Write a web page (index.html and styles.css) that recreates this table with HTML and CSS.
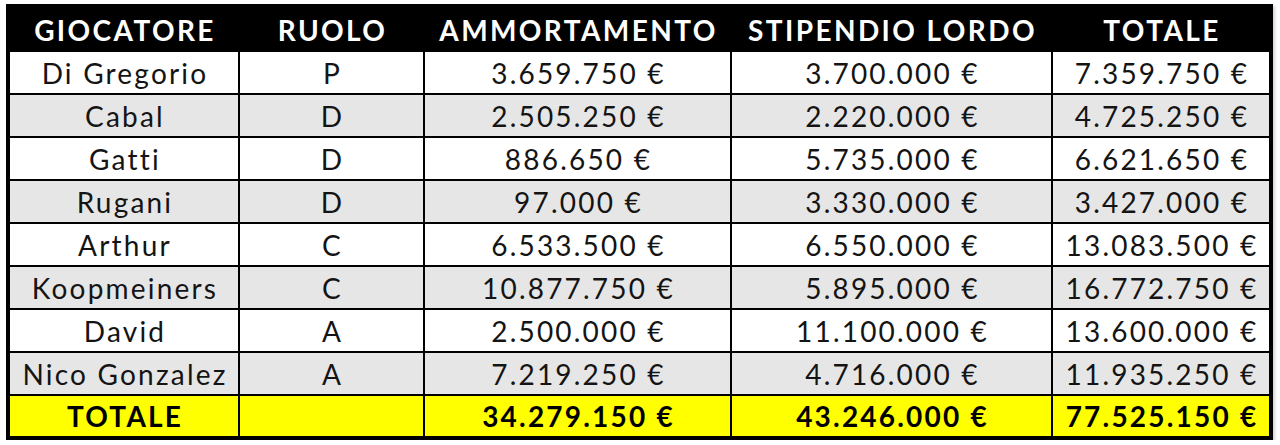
FILE: index.html
```html
<!DOCTYPE html>
<html lang="it">
<head>
<meta charset="utf-8">
<title>Monte ingaggi</title>
<link rel="stylesheet" href="styles.css">
</head>
<body>
<div class="sheet">
  <div class="cell head">GIOCATORE</div>
  <div class="cell head">RUOLO</div>
  <div class="cell head">AMMORTAMENTO</div>
  <div class="cell head">STIPENDIO LORDO</div>
  <div class="cell head">TOTALE</div>

  <div class="cell">Di Gregorio</div><div class="cell">P</div><div class="cell">3.659.750 €</div><div class="cell">3.700.000 €</div><div class="cell">7.359.750 €</div>
  <div class="cell alt">Cabal</div><div class="cell alt">D</div><div class="cell alt">2.505.250 €</div><div class="cell alt">2.220.000 €</div><div class="cell alt">4.725.250 €</div>
  <div class="cell">Gatti</div><div class="cell">D</div><div class="cell">886.650 €</div><div class="cell">5.735.000 €</div><div class="cell">6.621.650 €</div>
  <div class="cell alt">Rugani</div><div class="cell alt">D</div><div class="cell alt">97.000 €</div><div class="cell alt">3.330.000 €</div><div class="cell alt">3.427.000 €</div>
  <div class="cell">Arthur</div><div class="cell">C</div><div class="cell">6.533.500 €</div><div class="cell">6.550.000 €</div><div class="cell">13.083.500 €</div>
  <div class="cell alt">Koopmeiners</div><div class="cell alt">C</div><div class="cell alt">10.877.750 €</div><div class="cell alt">5.895.000 €</div><div class="cell alt">16.772.750 €</div>
  <div class="cell">David</div><div class="cell">A</div><div class="cell">2.500.000 €</div><div class="cell">11.100.000 €</div><div class="cell">13.600.000 €</div>
  <div class="cell alt">Nico Gonzalez</div><div class="cell alt">A</div><div class="cell alt">7.219.250 €</div><div class="cell alt">4.716.000 €</div><div class="cell alt">11.935.250 €</div>

  <div class="cell total">TOTALE</div>
  <div class="cell total"></div>
  <div class="cell total">34.279.150 €</div>
  <div class="cell total">43.246.000 €</div>
  <div class="cell total">77.525.150 €</div>
</div>
</body>
</html>
```
FILE: styles.css
```css
html, body {
  margin: 0;
  padding: 0;
  background: #ffffff;
}

body {
  padding: 4px 0 0 6px;
  font-family: "Lato", "Open Sans", sans-serif;
}

.sheet {
  display: grid;
  grid-template-columns: 228px 183px 305px 319px 216px;
  grid-template-rows: 42px repeat(8, 41px) 40px;
  gap: 2px;
  padding: 4px;
  width: max-content;
  background: #000000;
  box-shadow: 2px 2px 3px rgba(0, 0, 0, 0.18);
}

.cell {
  display: flex;
  align-items: center;
  justify-content: center;
  padding-left: 2px;
  background: #ffffff;
  color: #141414;
  font-size: 28px;
  letter-spacing: 2.2px;
  white-space: nowrap;
}

.alt {
  background: #e7e6e6;
}

.head {
  padding-left: 2px;
  padding-top: 1px;
  background: #000000;
  color: #ffffff;
  font-weight: 700;
  font-size: 28px;
  letter-spacing: 2.4px;
}

.total {
  background: #ffff00;
  color: #000000;
  font-weight: 700;
}
```
